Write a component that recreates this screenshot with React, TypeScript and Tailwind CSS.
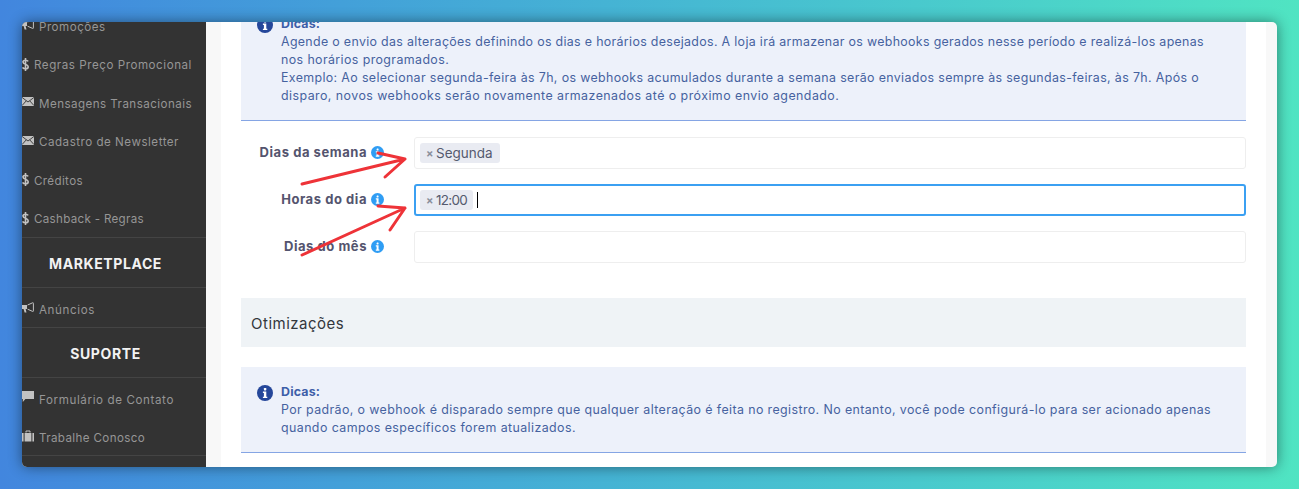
import React from "react";

const F = "font-['Inter','Liberation_Sans',sans-serif]";
const ICON = "#c2c2c2";

function Bullhorn({ className = "" }: { className?: string }) {
  return (
    <svg viewBox="0 0 12 11" width="12" height="11" className={`shrink-0 ${className}`}>
      <path d="M0 3h5v4H3.6l.9 3.5H2.6L1.6 7H0z" fill={ICON} />
      <path d="M5.6 3 10.6.8c.5-.2.8 0 .8.5v7.6c0 .5-.3.7-.8.5L5.6 7.2" fill="none" stroke={ICON} strokeWidth="1" />
    </svg>
  );
}
function Dollar() {
  return (
    <svg viewBox="0 0 7 13" width="7" height="13" className="shrink-0">
      <path d="M3.5 0v13M6.2 3.4C5.6 2.5 4.7 2.2 3.5 2.2 1.9 2.2 1 3 1 4.1c0 2.6 5.2 1.7 5.2 4.6 0 1.2-1.1 2.1-2.7 2.1-1.3 0-2.3-.4-2.9-1.4" fill="none" stroke={ICON} strokeWidth="1.6" />
    </svg>
  );
}
function Envelope() {
  return (
    <svg viewBox="0 0 12 9" width="12" height="9" className="shrink-0 mb-[2px]">
      <rect width="12" height="9" fill={ICON} />
      <path d="M0 .4 6 5l6-4.6M0 8.6 4.3 3.8M12 8.6 7.7 3.8" fill="none" stroke="#333333" strokeWidth="0.9" />
    </svg>
  );
}
function Comment() {
  return (
    <svg viewBox="0 0 12 12" width="12" height="12" className="shrink-0 mb-[1px]">
      <path d="M0 1h12v8H3.4L.8 12V9H0z" fill={ICON} />
    </svg>
  );
}
function Briefcase() {
  return (
    <svg viewBox="0 0 12 12" width="12" height="12" className="shrink-0 mt-[1px]">
      <path d="M4 2.6V1h4v1.6" fill="none" stroke={ICON} strokeWidth="1" />
      <path d="M0 3h1.6v8.6H0zM2.6 3h6.8v8.6H2.6zM10.4 3H12v8.6h-1.6z" fill={ICON} />
    </svg>
  );
}
function Info({ size, color, className = "" }: { size: number; color: string; className?: string }) {
  return (
    <svg viewBox="0 0 16 16" width={size} height={size} className={`shrink-0 ${className}`}>
      <circle cx="8" cy="8" r="8" fill={color} />
      <rect x="6.9" y="3" width="2.4" height="2.4" rx="0.6" fill="#ffffff" />
      <path d="M5.9 6.6h3.4v5.1h1v1.4H5.9v-1.4h1V8H5.9z" fill="#ffffff" />
    </svg>
  );
}

function Row({ icon, text, textClass }: { icon: React.ReactNode; text: string; textClass: string }) {
  return (
    <div className="h-[38.4px] flex items-center text-[11.6px] text-[#969696] whitespace-nowrap">
      {icon}
      <span className={textClass}>{text}</span>
    </div>
  );
}

function Head({ text }: { text: string }) {
  return (
    <div className="flex items-center justify-center h-[50px] pt-[2px] pr-[17px] border-b border-[#444444] text-[14px] font-bold tracking-[0.6px] text-[#f2f2f2]">
      {text}
    </div>
  );
}

function Tip({ children, className = "" }: { children: React.ReactNode; className?: string }) {
  return (
    <div className={`flex bg-[#edf1fa] border-b border-[#85a5e4] pl-4 text-[#46629f] text-[12.4px] leading-[18px] whitespace-nowrap ${className}`}>
      <Info size={16} color="#25479a" className="mt-[2px]" />
      <div className="ml-2">
        <div className="font-bold text-[#3d5ea8] tracking-[0.2px]">Dicas:</div>
        {children}
      </div>
    </div>
  );
}

function Field({ label, children, focus }: { label: string; children?: React.ReactNode; focus?: boolean }) {
  return (
    <div className="flex items-center h-8">
      <div className="w-[126px] text-right text-[13px] font-bold text-[#54546e] tracking-[0.55px] whitespace-nowrap">{label}</div>
      <Info size={13} color="#2f9df4" className="ml-1 mb-[1px]" />
      <div
        className={`ml-[30px] flex-1 h-8 rounded-[3px] flex items-center ${
          focus ? "border-2 border-[#3ba0f2] pl-1" : "border border-[#eeeeee] pl-[5px]"
        }`}
      >
        {children}
      </div>
    </div>
  );
}

function Chip({ text, className }: { text: string; className: string }) {
  return (
    <div className={`h-5 rounded-[3px] bg-[#e9ebf2] flex items-center pl-[6px] text-[13.5px] text-[#555a6e] ${className}`}>
      <span className="w-[10px] text-[11px] font-bold text-[#8a8f9c]">×</span>
      {text}
    </div>
  );
}

export default function App() {
  return (
    <div className={`${F} w-[1299px] h-[489px] p-[22px] bg-gradient-to-r from-[#4286de] to-[#50e4c2] overflow-hidden`}>
      <div className="relative w-[1255px] h-[445px] rounded-[5px] overflow-hidden flex bg-[#f8f8f8] shadow-[0_0_14px_rgba(0,0,0,0.45)]">
        <aside className="w-[184px] shrink-0 bg-[#333333] overflow-hidden">
          <div className="-mt-[15px]">
            <Row icon={<Bullhorn className="mb-[4px]" />} text="Promoções" textClass="ml-[5px] mt-[3px] tracking-[0.5px]" />
            <Row icon={<Dollar />} text="Regras Preço Promocional" textClass="ml-[5px] mt-[3px] tracking-[0.55px]" />
            <Row icon={<Envelope />} text="Mensagens Transacionais" textClass="ml-[5px] mt-[4px] tracking-[0.45px]" />
            <Row icon={<Envelope />} text="Cadastro de Newsletter" textClass="ml-[5px] mt-[3px] tracking-[0.51px]" />
            <Row icon={<Dollar />} text="Créditos" textClass="ml-[5px] mt-[4px] tracking-[0.36px]" />
            <div className="border-b border-[#444444]">
              <Row icon={<Dollar />} text="Cashback - Regras" textClass="ml-[5px] mt-[4px] tracking-[0.31px]" />
            </div>
            <Head text="MARKETPLACE" />
            <div className="border-b border-[#444444]">
              <Row icon={<Bullhorn />} text="Anúncios" textClass="ml-[5px] mt-[6px] tracking-[0.61px]" />
            </div>
            <Head text="SUPORTE" />
            <Row icon={<Comment />} text="Formulário de Contato" textClass="ml-[5px] mt-[7px] tracking-[0.61px]" />
            <div className="border-b border-[#444444]">
              <Row icon={<Briefcase />} text="Trabalhe Conosco" textClass="ml-[5px] mt-[6px] tracking-[0.375px]" />
            </div>
          </div>
        </aside>

        <main className="ml-[15px] w-[1045px] h-full bg-white px-5 overflow-hidden">
          <Tip className="-mt-[7px] pb-[15px]">
            <div className="tracking-[0.33px]">Agende o envio das alterações definindo os dias e horários desejados. A loja irá armazenar os webhooks gerados nesse período e realizá-los apenas</div>
            <div className="tracking-[0.4px]">nos horários programados.</div>
            <div className="tracking-[0.363px]">Exemplo: Ao selecionar segunda-feira às 7h, os webhooks acumulados durante a semana serão enviados sempre às segundas-feiras, às 7h. Após o</div>
            <div className="tracking-[0.455px]">disparo, novos webhooks serão novamente armazenados até o próximo envio agendado.</div>
          </Tip>

          <div className="mt-4 flex flex-col gap-[15px]">
            <Field label="Dias da semana"><Chip text="Segunda" className="pr-[7px]" /></Field>
            <Field label="Horas do dia" focus>
              <Chip text="12:00" className="pr-[6px] tracking-[-0.7px]" />
              <div className="ml-[4px] w-px h-4 bg-black" />
            </Field>
            <Field label="Dias do mês" />
          </div>

          <div className="mt-[35px] h-[49px] pt-[3px] bg-[#eff3f6] flex items-center pl-[10px] text-[15px] tracking-[0.5px] text-[#33373d]">
            Otimizações
          </div>

          <Tip className="mt-5 pt-4 pb-[15px]">
            <div className="tracking-[0.4px]">Por padrão, o webhook é disparado sempre que qualquer alteração é feita no registro. No entanto, você pode configurá-lo para ser acionado apenas</div>
            <div className="tracking-[0.42px]">quando campos específicos forem atualizados.</div>
          </Tip>
        </main>

        <svg className="absolute left-0 top-0 pointer-events-none" width="1255" height="445" fill="none" stroke="#ee3338" strokeWidth="3" strokeLinecap="round" strokeLinejoin="round">
          <g transform="translate(-22 -22)">
            <path d="M302 184 L405 159 M378 153 L405 159 L385 177" />
            <path d="M302 255 L405 208 M378 206 L405 208 L390 230" />
          </g>
        </svg>
      </div>
    </div>
  );
}
